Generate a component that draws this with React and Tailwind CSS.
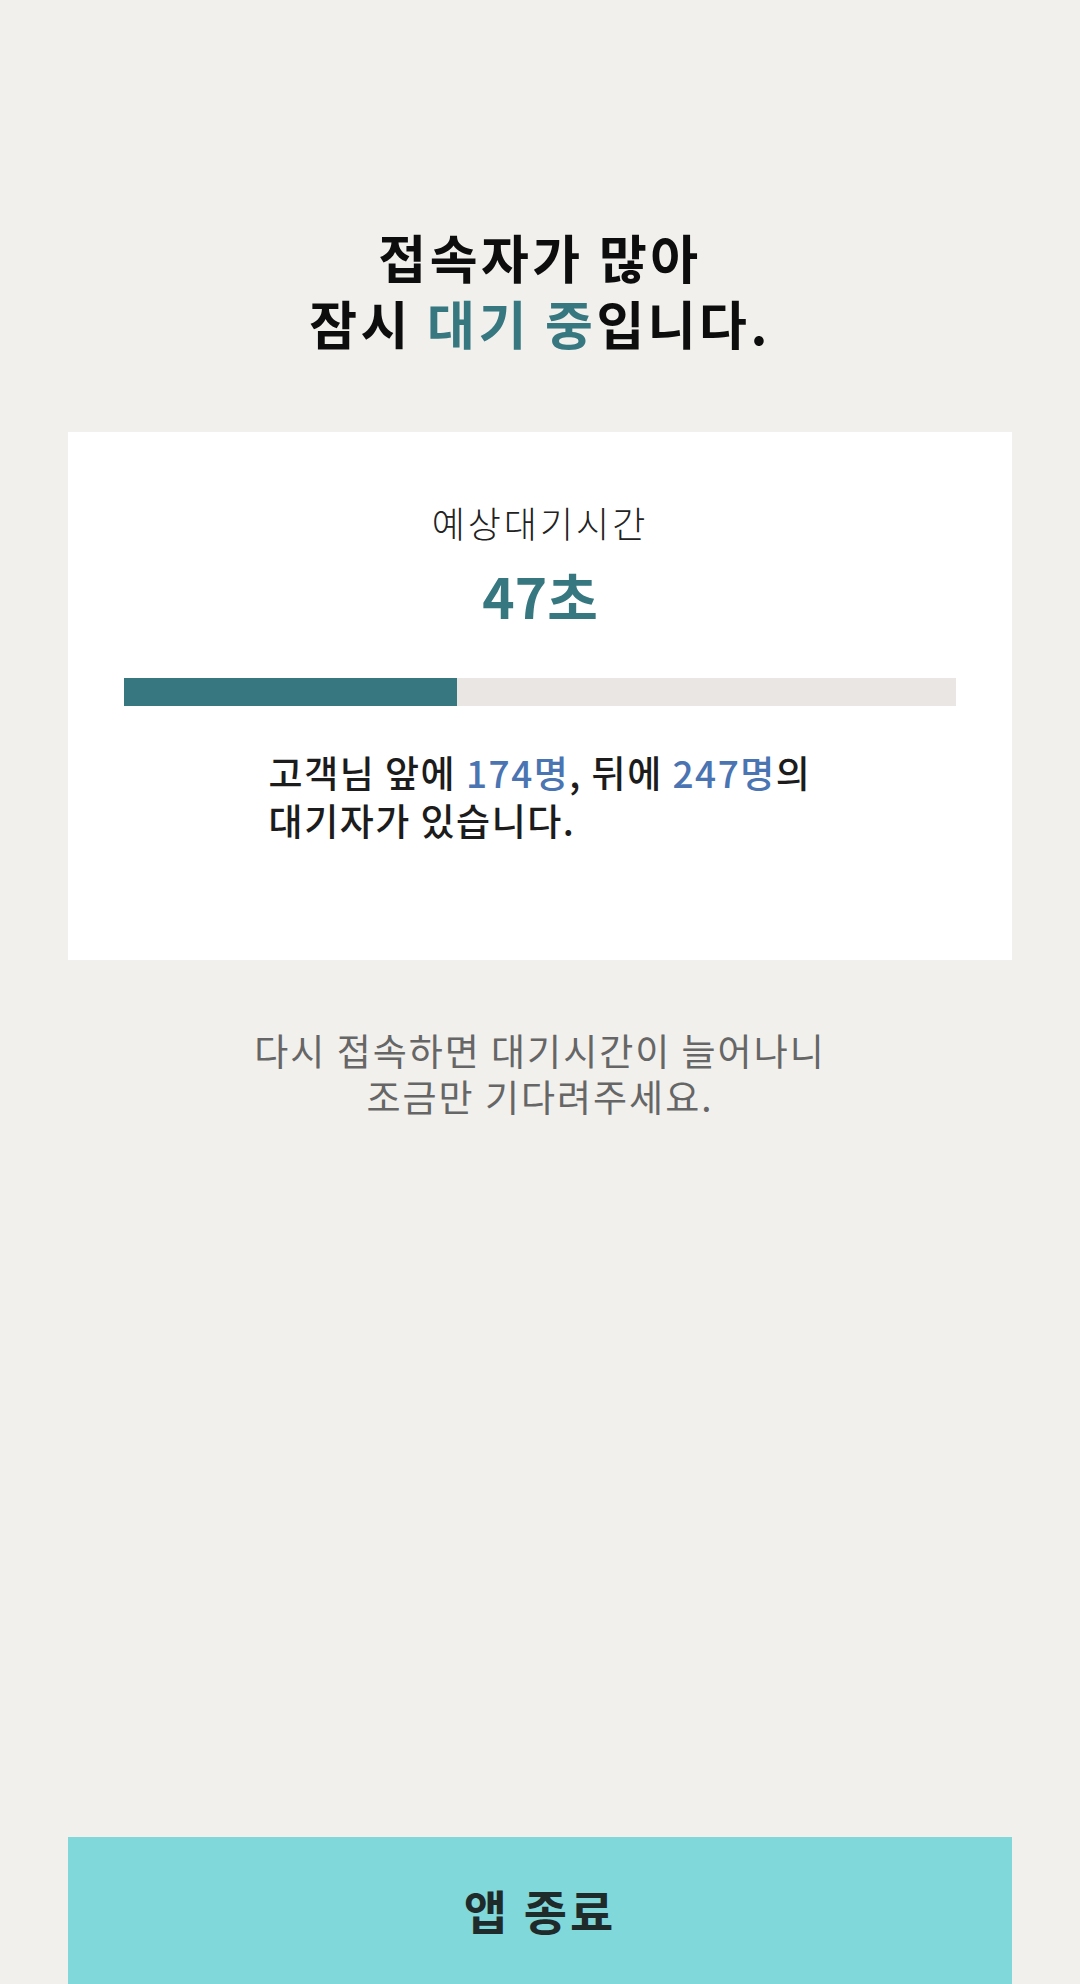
export default function App() {
  return (
    <div className="min-h-[1984px] w-full bg-[#f1f0ed] flex flex-col items-center [font-family:'Noto_Sans_CJK_KR','Noto_Sans',sans-serif]">
      <h1 className="pt-[224px] text-center text-[52px] leading-[66px] font-bold text-[#0d0d0d] tracking-[3.5px]">
        접속자가 많아
        <br />
        잠시 <span className="text-[#367780]">대기 중</span>입니다.
      </h1>

      <div className="mt-[76px] w-[944px] bg-white px-[56px] pt-[66px] pb-[116px] flex flex-col items-center">
        <div className="text-[36px] leading-[48px] text-[#222] font-light tracking-[3px]">예상대기시간</div>
        <div className="mt-[17px] text-[55px] leading-[64px] font-bold text-[#367780]">47초</div>
        <div className="mt-[51px] w-full h-[28px] bg-[#e9e6e3]">
          <div className="h-full w-[40%] bg-[#367780]" />
        </div>
        <p className="mt-[42px] text-left text-[37px] leading-[48px] text-[#1c1c1c] font-medium tracking-[1.5px]">
          고객님 앞에 <span className="text-[#4a74b2]">174명</span>, 뒤에{' '}
          <span className="text-[#4a74b2]">247명</span>의
          <br />
          대기자가 있습니다.
        </p>
      </div>

      <p className="mt-[67px] text-center text-[37px] leading-[46px] text-[#666] font-normal tracking-[2px]">
        다시 접속하면 대기시간이 늘어나니
        <br />
        조금만 기다려주세요.
      </p>

      <div className="mt-auto w-[944px] h-[147px] bg-[#80d8da] flex items-center justify-center">
        <span className="text-[47px] font-bold text-[#1f2a2a] tracking-[3px]">앱 종료</span>
      </div>
    </div>
  );
}
